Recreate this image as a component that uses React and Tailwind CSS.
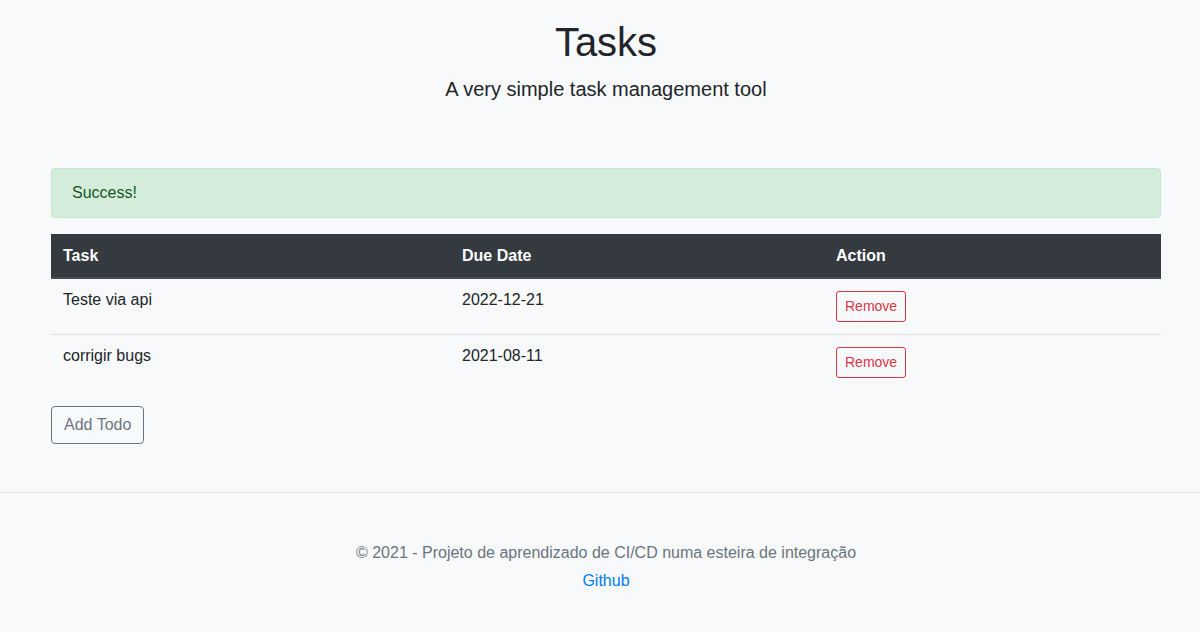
const todos = [
  { id: 1, task: 'Teste via api', due: '2022-12-21' },
  { id: 2, task: 'corrigir bugs', due: '2021-08-11' },
]

function TodoRow({ todo }){
  return (
    <tr>
      <td className="border-t border-[#dee2e6] px-3 pt-[9px] pb-3 align-top">{todo.task}</td>
      <td className="border-t border-[#dee2e6] px-3 pt-[9px] pb-3 align-top">{todo.due}</td>
      <td className="border-t border-[#dee2e6] px-3 py-3 align-top">
        <button className="border border-[#dc3545] text-[#dc3545] rounded-[3px] px-2 py-1 text-[14px] leading-[21px]">Remove</button>
      </td>
    </tr>
  )
}

export default function App(){
  return (
    <div className="min-h-[632px] bg-[#f8f9fa] text-[#212529] font-['Liberation_Sans',Arial,sans-serif] text-[16px] leading-6">
      <div className="w-[1110px] ml-[51px]">
        <header className="text-center pt-[18px] pb-12">
          <h1 className="text-[40px] leading-[48px] font-normal mb-2">Tasks</h1>
          <p className="text-[20px] leading-[30px] mb-4">A very simple task management tool</p>
        </header>

        <div className="bg-[#d4edda] border border-[#c3e6cb] text-[#155724] rounded px-5 py-3 mb-4">Success!</div>

        <table className="w-full border-collapse mb-4">
          <thead>
            <tr className="bg-[#343a40] text-white text-left">
              <th className="w-[399px] px-3 pt-[10px] pb-[9px] border-b-2 border-[#454d55] font-bold">Task</th>
              <th className="w-[374px] px-3 pt-[10px] pb-[9px] border-b-2 border-[#454d55] font-bold">Due Date</th>
              <th className="px-3 pt-[10px] pb-[9px] border-b-2 border-[#454d55] font-bold">Action</th>
            </tr>
          </thead>
          <tbody>
            {todos.map(t => <TodoRow key={t.id} todo={t} />)}
          </tbody>
        </table>

        <button className="border border-[#6c757d] text-[#6c757d] rounded px-3 py-[6px] leading-6">Add Todo</button>
      </div>

      <footer className="mt-12 border-t border-[#dee2e6] pt-12 pb-10 text-center text-[#6c757d]">
        <p className="ml-[12px]">© 2021 - Projeto de aprendizado de CI/CD numa esteira de integração</p>
        <a href="#" className="block mt-1 ml-[12px] text-[#007bff]">Github</a>
      </footer>
    </div>
  )
}
